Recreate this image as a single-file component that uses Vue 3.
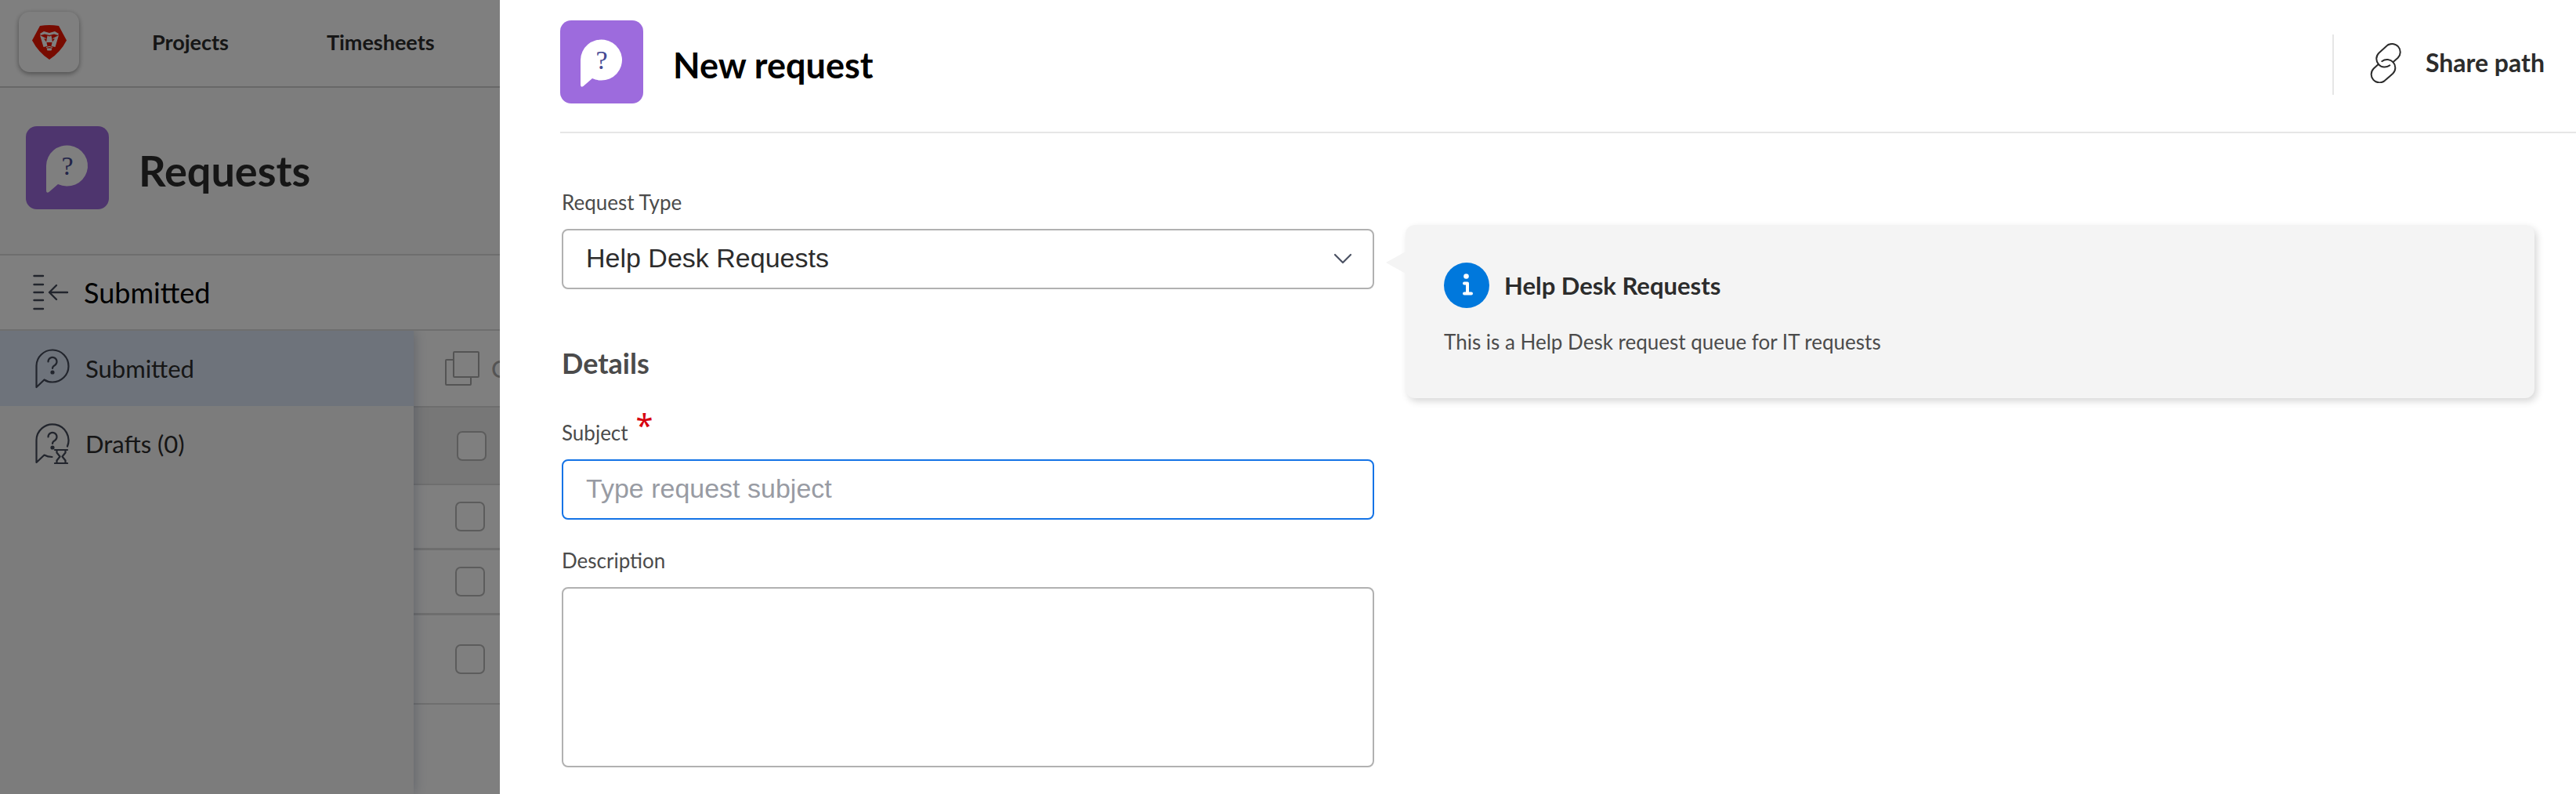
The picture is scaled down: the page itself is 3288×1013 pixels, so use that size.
<script setup>
import { ref } from 'vue'

const requestType = ref('Help Desk Requests')
const subject = ref('')
const description = ref('')

const topLinks = ['Projects', 'Timesheets']
const navItems = [
  { label: 'Submitted', active: true, draft: false },
  { label: 'Drafts (0)', active: false, draft: true },
]
const rows = ['short', 'short', 'tall']
</script>

<template>
  <div class="app">
    <div class="page">
      <header class="topbar">
        <a class="logo" href="#" aria-label="Home">
          <svg width="44" height="44" viewBox="0 0 44 44">
            <path d="M10 1Q22 -1 34 1L44 19.5Q36 35 22 44Q8 35 0 19.5Z" fill="#f01600" />
            <path d="M10 11L15 8L22 10L29 8L34 11L33 13L28 11.500L22 13L16 11.500L11 13Z" fill="#fff" />
            <path d="M10 13L19 17.500L15 17.500L18.500 22L19.500 27L14.500 28Z" fill="#fff" />
            <path d="M34 13L25 17.500L29 17.500L25.500 22L24.500 27L29.500 28Z" fill="#fff" />
            <path d="M19.500 13.500L22 14.500L24.500 13.500L26 22H18Z" fill="#fff" />
            <path d="M18.500 23.500H25.500L22.700 25.500V26.500L27 28L25.500 32H18.500L17 28L21.300 26.500V25.500Z" fill="#f01600" />
            <path d="M18 28L22 26.800L26 28V29L22 28L18 29Z" fill="#fff" />
            <path d="M18.500 29.500H25.500L24.500 32.500H19.500Z" fill="#fff" />
          </svg>
        </a>
        <nav class="top-links" aria-label="Main">
          <a v-for="link in topLinks" :key="link" href="#">{{ link }}</a>
        </nav>
      </header>

      <div class="page-title">
        <svg class="tile" viewBox="0 0 106 106">
          <rect width="106" height="106" rx="14" fill="#9d6bdd" />
          <path d="M26 50.500A26.500 26 0 1 1 41 74L29.500 84Q26 86 26 82Z" fill="#fff" />
          <text x="53" y="62" text-anchor="middle" class="tile-mark">?</text>
        </svg>
        <h1>Requests</h1>
      </div>

      <div class="section-bar">
        <button type="button" class="collapse" aria-label="Collapse menu">
          <svg width="46" height="46" viewBox="0 0 46 46" fill="none" stroke="#454b5a" stroke-width="2.4" stroke-linecap="round" stroke-linejoin="round">
            <path d="M1.500 2H13M1.500 13H13M1.500 23H13M1.500 33H13M1.500 44H13" />
            <path d="M44 23H21M30 14L21 23L30 32" />
          </svg>
        </button>
        <span>Submitted</span>
      </div>

      <div class="page-body">
        <nav class="sidebar" aria-label="Requests">
          <a v-for="item in navItems" :key="item.label" href="#" :class="{ active: item.active }">
            <svg width="44" height="52" viewBox="0 0 44 52" fill="none" stroke="#454b5a" stroke-width="2.2" stroke-linecap="round" stroke-linejoin="round">
              <path v-if="!item.draft" d="M1.500 50V22.500A20.500 20.500 0 1 1 22 43.500Q16 43.500 11.500 40.500Z" />
              <path v-else d="M41 29.500A20.500 20.500 0 1 0 1.500 22.500V50L11.500 40.500Q16 43 21.500 43" />
              <path d="M16.500 17.500a5.500 5.500 0 1 1 8.500 4.500Q22 23.500 22 26" />
              <circle cx="22" cy="31" r="1.500" fill="#454b5a" />
              <path v-if="item.draft" d="M25 34H41M25 51H41M27.500 34V37.500L31.500 42.500L27.500 47.500V51M38.500 34V37.500L34.500 42.500L38.500 47.500V51" />
            </svg>
            <span>{{ item.label }}</span>
          </a>
        </nav>
        <div class="list">
          <div class="toolbar">
            <svg width="44" height="44" viewBox="0 0 44 44" fill="none" stroke="#a8a8a8" stroke-width="2">
              <rect x="11" y="1" width="32" height="32" rx="1" />
              <path d="M11 11H2Q1 11 1 12V42Q1 43 2 43H32Q33 43 33 42V33" />
            </svg>
            <span>C</span>
          </div>
          <table>
            <thead>
              <tr><th><input type="checkbox" aria-label="Select all" /></th></tr>
            </thead>
            <tbody>
              <tr v-for="(size, i) in rows" :key="i" :class="size">
                <td><input type="checkbox" :aria-label="`Select row ${i + 1}`" /></td>
              </tr>
            </tbody>
          </table>
        </div>
      </div>
      <div class="shade"></div>
    </div>

    <main class="panel">
      <header class="panel-header">
        <svg class="tile" viewBox="0 0 106 106">
          <rect width="106" height="106" rx="14" fill="#9d6bdd" />
          <path d="M26 50.500A26.500 26 0 1 1 41 74L29.500 84Q26 86 26 82Z" fill="#fff" />
          <text x="53" y="62" text-anchor="middle" class="tile-mark">?</text>
        </svg>
        <h2>New request</h2>
        <button type="button" class="share">
          <svg width="40" height="52" viewBox="0 0 40 52" fill="none" stroke="#2c2c2c" stroke-width="2" stroke-linecap="round">
            <path d="M29.500 25.300L35.700 19.800A10.500 10.500 0 0 0 21.700 4.200L11.300 13.700A10.500 10.500 0 0 0 25.300 29.300" />
            <path d="M11 27.700L4.700 33.500A10.500 10.500 0 0 0 18.700 49.100L29.300 39.800A10.500 10.500 0 0 0 15.300 24.200" />
          </svg>
          <span>Share path</span>
        </button>
      </header>

      <div class="content">
        <form class="form" @submit.prevent>
          <div class="field">
            <label for="request-type">Request Type</label>
            <div class="select">
              <select id="request-type" v-model="requestType">
                <option>Help Desk Requests</option>
              </select>
              <svg width="24" height="14" viewBox="0 0 24 14" fill="none" stroke="#4b5263" stroke-width="2.200" stroke-linecap="round" stroke-linejoin="round">
                <path d="M2 2L12 12L22 2" />
              </svg>
            </div>
          </div>
          <h3>Details</h3>
          <div class="field">
            <label for="subject">Subject<span class="required">*</span></label>
            <input id="subject" v-model="subject" type="text" class="focused" placeholder="Type request subject" />
          </div>
          <div class="field">
            <label for="description">Description</label>
            <textarea id="description" v-model="description"></textarea>
          </div>
        </form>

        <aside class="info">
          <div class="info-head">
            <svg width="58" height="58" viewBox="0 0 58 58">
              <circle cx="29" cy="29" r="29" fill="#0078dc" />
              <circle cx="28.500" cy="17.500" r="3.300" fill="#fff" />
              <path d="M26 26.500H30V39.500M26 39.500H35" fill="none" stroke="#fff" stroke-width="4" stroke-linecap="round" stroke-linejoin="round" />
            </svg>
            <h4>Help Desk Requests</h4>
          </div>
          <p>This is a Help Desk request queue for IT requests</p>
        </aside>
      </div>
    </main>
  </div>
</template>

<style>
body {
  margin: 0;
}
</style>

<style scoped>
* {
  box-sizing: border-box;
}

.app {
  display: grid;
  grid-template-columns: 638px minmax(0, 1fr);
  min-height: 100vh;
  font-family: Lato, "Liberation Sans", sans-serif;
  color: #2c2c2c;
  background: #fff;
}

h1, h2, h3, h4, p {
  margin: 0;
}

a {
  color: inherit;
  text-decoration: none;
}

button {
  padding: 0;
  border: 0;
  background: none;
  color: inherit;
  font: inherit;
}

svg {
  display: block;
  flex: none;
}

/* dimmed page behind the panel */
.page {
  position: relative;
  display: flex;
  flex-direction: column;
  overflow: hidden;
  background: #fff;
}

.shade {
  position: absolute;
  inset: 0;
  background: rgba(0, 0, 0, 0.5);
  z-index: 2;
}

.topbar {
  display: flex;
  align-items: center;
  gap: 93px;
  height: 112px;
  padding: 0 24px 3px;
  border-bottom: 2px solid #d0d0d0;
}

.logo {
  display: flex;
  align-items: center;
  justify-content: center;
  width: 77px;
  height: 77px;
  border-radius: 14px;
  box-shadow: 0 2px 6px rgba(0, 0, 0, 0.4);
}

.top-links {
  display: flex;
  gap: 125px;
  font-size: 27px;
  font-weight: 700;
  line-height: 36px;
}

.page-title {
  display: flex;
  gap: 38px;
  height: 214px;
  padding: 49px 33px 0;
  background: #fafafa;
  border-bottom: 2px solid #dcdcdc;
}

.tile {
  width: 106px;
  height: 106px;
}

.tile-mark {
  font-family: "Liberation Serif", serif;
  font-size: 34px;
  fill: #444a93;
}

h1 {
  font-size: 54px;
  font-weight: 700;
  line-height: 114px;
}

.section-bar {
  display: flex;
  align-items: center;
  gap: 19px;
  height: 96px;
  padding: 0 42px;
  border-bottom: 2px solid #dcdcdc;
  font-size: 36px;
  color: #000;
}

.page-body {
  flex: 1;
  display: flex;
  overflow: hidden;
}

.sidebar {
  position: relative;
  z-index: 1;
  flex: none;
  width: 528px;
  background: #f8f8f8;
  box-shadow: 0 0 16px rgba(60, 80, 120, 0.35);
}

.sidebar a {
  display: flex;
  align-items: center;
  gap: 20px;
  height: 96px;
  padding: 0 45px;
  font-size: 31px;
}

.sidebar .active {
  background: #dce6f6;
}

.list {
  flex: 1;
  min-width: 0;
  overflow: hidden;
}

.toolbar {
  display: flex;
  align-items: center;
  gap: 15px;
  height: 98px;
  padding-left: 40px;
  border-bottom: 2px solid #dcdcdc;
  font-size: 31px;
  color: #a8a8a8;
}

table {
  width: 100%;
  border-collapse: separate;
  border-spacing: 0;
}

th {
  height: 99px;
  padding: 0 0 0 55px;
  border-bottom: 2px solid #dcdcdc;
  background: #eeeeee;
}

td {
  height: 83px;
  padding: 0 0 0 53px;
  border-bottom: 3px solid #dcdcdc;
}

.tall td {
  height: 114px;
  border-bottom-width: 2px;
}

input[type="checkbox"] {
  display: block;
  appearance: none;
  width: 38px;
  height: 38px;
  margin: 0;
  border: 2px solid #b9b9b9;
  border-radius: 7px;
  background: #fff;
}

/* request panel */
.panel {
  background: #fff;
}

.panel-header {
  display: flex;
  gap: 38px;
  height: 170px;
  margin-left: 77px;
  padding: 26px 40px 0 0;
  border-bottom: 2px solid #e6e6e6;
}

h2 {
  font-size: 45px;
  font-weight: 700;
  line-height: 114px;
  color: #000;
}

.share {
  display: flex;
  align-items: center;
  gap: 31px;
  height: 77px;
  margin: 18px 0 0 auto;
  padding: 0 0 6px 46px;
  border-left: 2px solid #e6e6e6;
  font-size: 32px;
  font-weight: 700;
}

.content {
  display: grid;
  grid-template-columns: minmax(0, 1037fr) minmax(0, 1441fr);
  align-items: start;
  gap: 40px;
  padding: 70px 53px 34px 79px;
}

.field {
  display: flex;
  flex-direction: column;
  gap: 16px;
}

.field + .field {
  margin-top: 34px;
}

label {
  display: flex;
  align-items: baseline;
  gap: 10px;
  height: 36px;
  font-size: 26px;
  line-height: 36px;
  color: #4b4b4b;
}

.required {
  align-self: flex-start;
  font-family: "Noto Sans", sans-serif;
  font-size: 40px;
  line-height: 16px;
  color: #d7000f;
}

h3 {
  margin: 73px 0 50px;
  font-size: 36px;
  font-weight: 700;
  line-height: 42px;
  color: #4b4b4b;
}

.select {
  position: relative;
}

.select svg {
  position: absolute;
  top: 31px;
  right: 28px;
  pointer-events: none;
}

select,
input[type="text"],
textarea {
  display: block;
  width: 100%;
  height: 77px;
  padding: 0 29px 3px;
  border: 2px solid #b1b1b1;
  border-radius: 8px;
  outline: 0;
  appearance: none;
  background: #fff;
  font-family: "Liberation Sans", Arial, sans-serif;
  font-size: 34px;
  color: #2c2c2c;
}

textarea {
  height: 230px;
  padding: 18px 29px;
  resize: none;
}

input.focused {
  border-color: #1473e6;
}

input::placeholder {
  color: #989ba3;
}

.info {
  position: relative;
  margin-top: 47px;
  padding: 48px 49px 54px;
  border-radius: 12px;
  background: #f4f4f4;
  box-shadow: 3px 4px 10px rgba(0, 0, 0, 0.16);
}

.info::before {
  content: "";
  position: absolute;
  top: 34px;
  left: -25px;
  border: solid transparent;
  border-width: 14px 25px 14px 0;
  border-right-color: #f4f4f4;
}

.info-head {
  display: flex;
  align-items: center;
  gap: 19px;
}

h4 {
  font-size: 31px;
  font-weight: 700;
}

.info p {
  margin-top: 25px;
  font-size: 26px;
  line-height: 36px;
  color: #4b4b4b;
}
</style>
